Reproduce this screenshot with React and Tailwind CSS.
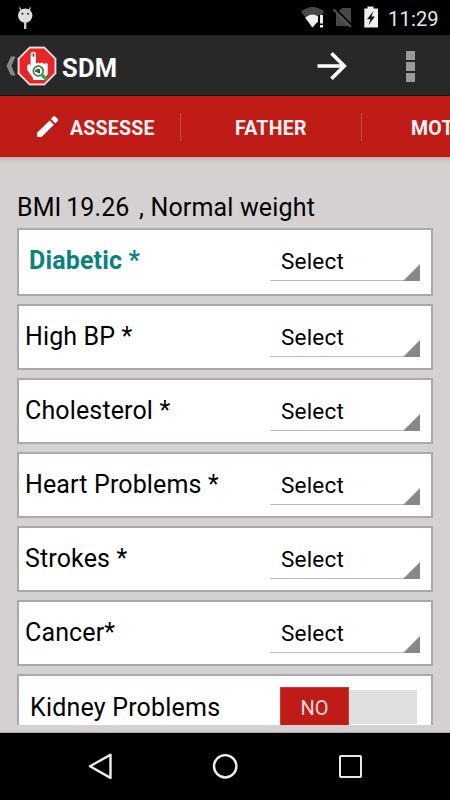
const rows = ["High BP *", "Cholesterol *", "Heart Problems *", "Strokes *", "Cancer*"];

function StatusBar() {
  return (
    <div className="flex h-[35px] shrink-0 items-start bg-black text-[#e6e6e6]">
      <svg className="ml-4 mt-[5px] h-6 w-[18px]" viewBox="0 0 18 24" fill="none">
        <path d="M3.500 2.500 5.500 6M14.500 2.500l-2 3.500" stroke="#dedede" strokeWidth="1.200" />
        <circle cx="9.200" cy="10.600" r="7.200" fill="#dedede" />
        <path d="M9.200 17v7" stroke="#c9c9c9" strokeWidth="2.400" />
        <circle cx="6.500" cy="8.700" r="1" fill="#222" />
        <circle cx="12" cy="8.700" r="1" fill="#222" />
      </svg>
      <svg className="ml-[267px] mt-[6px] h-[22px] w-6" viewBox="0 0 24 22">
        <path d="M0 5.500Q11.500-3.500 23.500 5.500L20.500 9H17.500v4L11.500 21Z" fill="#484848" />
        <path d="M4.200 11.700Q11 6 17 10.500v4.800L11.500 21.400Z" fill="#eee" />
        <path d="M19 9h3v8.500h-3zM19 19h3v2.500h-3z" fill="#eee" />
      </svg>
      <svg className="ml-2 mt-[6px] h-[22px] w-5" viewBox="0 0 20 22" fill="none">
        <path d="M9 2h9v18H3V8Z" fill="#484848" />
        <path d="m2.500 3 17 17" stroke="#000" strokeWidth="2" />
        <path d="m.5 3.500 17.500 17.500" stroke="#565656" strokeWidth="1.800" />
      </svg>
      <svg className="ml-[10px] mt-[6px] h-[22px] w-4" viewBox="0 0 16 22">
        <path d="M4.500.5h6v2H15V21.500H1.300v-19h3.200Z" fill="#eee" />
        <path d="M10.500 5 4 13.200h3.500L5.500 19 12 10.600H8.500Z" fill="#111" />
      </svg>
      <span className="ml-[9px] mt-[7px] w-[52px] whitespace-nowrap text-[20px] leading-6 tracking-[0.2px]">11:29</span>
    </div>
  );
}

function AppBar() {
  return (
    <div className="flex h-[61px] shrink-0 items-center border-t border-b border-t-[#202020] border-b-[#151515] bg-[#282828]">
      <svg className="ml-[6px] h-5 w-[10px]" viewBox="0 0 10 20">
        <path d="M5 .5h4.500L5.500 10l4 9.500H5L.5 10Z" fill="#888" />
      </svg>
      <svg className="ml-[1px] h-10 w-10" viewBox="0 0 40 40">
        <path d="M12.300.8h15.400L39.200 12.300v15.400L27.700 39.200H12.300L.8 27.700V12.300Z" fill="#eceaea" stroke="#999" strokeWidth=".6" />
        <path d="M13 2.500h14L37.500 13v14L27 37.500H13L2.500 27V13Z" fill="#e92525" />
        <path d="M13.600 8.500q0-2.800 2.700-2.800t2.700 2.800v9l2.500-1 1 1 2.500-1 1.500 1.200 3-.7 1.200 1V28l-2 3v3H16v-2l-5.700-8V19l2.300-1 1 2Z" fill="#fff" />
        <path d="M14.600 9h3.600M16.400 7.200v3.800" stroke="#b44" strokeWidth="1.100" />
        <circle cx="21.300" cy="25" r="5" fill="#e6f6ed" stroke="#187b49" strokeWidth="1.500" />
        <path d="m19.500 22 3 2v4l-3-2Z" fill="#c83635" />
        <path d="M22 23v4M18 25h2" stroke="#263b30" strokeWidth="1.500" />
        <path d="m25 29 4.500 4.200" stroke="#24ab42" strokeWidth="3.300" />
      </svg>
      <h1 className="ml-[5px] mt-[5px] w-[70px] whitespace-nowrap text-[25.500px] font-bold leading-[30px] tracking-[0.2px] text-white">SDM</h1>
      <svg className="ml-[185px] h-[30px] w-[30px]" viewBox="0 0 30 30" fill="none" stroke="#fff" strokeWidth="3.700">
        <path d="M.5 15H27M14.500 2.200 27.200 15 14.500 27.800" />
      </svg>
      <div className="ml-[59px] mt-[2px] flex flex-col gap-[2px]">
        <i className="h-[9px] w-[9px] bg-[#999]" />
        <i className="h-[9px] w-[9px] bg-[#999]" />
        <i className="h-[9px] w-[9px] bg-[#999]" />
      </div>
    </div>
  );
}

function Tabs() {
  return (
    <div className="flex h-[61px] w-full shrink-0 items-center overflow-hidden border-b border-[#d20e10] bg-[#bf1b17] pt-px text-[19.500px] font-bold leading-6 tracking-[0.25px] text-[#fff4f4]">
      <div className="flex w-[180px] shrink-0 items-center">
        <svg className="ml-[37px] h-[22px] w-[22px]" viewBox="0 0 22 22" fill="#fff">
          <path d="m0 16.700 12.600-12.200 4.300 4.300L4.500 21H0ZM14 3 16.200.5q1-.8 2 0l2.600 2.400q1 1 0 2L18.300 7.500Z" />
        </svg>
        <span className="ml-[11px] mt-[4px] whitespace-nowrap">ASSESSE</span>
      </div>
      <i className="h-7 w-px shrink-0 bg-[#ce4742]" />
      <span className="mt-[4px] w-[180px] shrink-0 pl-[54px]">FATHER</span>
      <i className="h-7 w-px shrink-0 bg-[#ce4742]" />
      <span className="mt-[4px] shrink-0 pl-[49px]">MOTHER</span>
    </div>
  );
}

function Select() {
  return (
    <div className="ml-auto mr-[11px] mt-[18px] flex h-[33px] w-[150px] border-b border-[#bcbcbc]">
      <span className="ml-[11px] whitespace-nowrap text-[22.500px] leading-[26px] tracking-[0.2px]">Select</span>
      <svg className="-mb-px ml-auto mt-auto h-[17px] w-[17px]" viewBox="0 0 17 17">
        <path d="M0 17 17 0v17Z" fill="#888" />
      </svg>
    </div>
  );
}

function Field({ label, first = false }) {
  return (
    <div className={`flex shrink-0 items-start border-2 border-[#aaa8a8] bg-white ${first ? "h-[68px]" : "h-[66px]"}`}>
      <span className={first ? "ml-[10px] mt-[16px] whitespace-nowrap text-[25px] font-bold leading-[30px] tracking-[0.16px] text-[#078480]" : "ml-[6px] mt-[16px] whitespace-nowrap text-[25px] leading-[30px] tracking-[0.14px]"}>{label}</span>
      <Select />
    </div>
  );
}

export default function App() {
  return (
    <div className="flex h-[800px] w-[450px] flex-col overflow-hidden bg-[#d5d1d0] font-['Roboto',sans-serif] text-black">
      <StatusBar />
      <AppBar />
      <Tabs />
      <div className="h-2 shrink-0 bg-gradient-to-b from-[#b8b4b3] via-[#cecac9] to-[#d5d1d0]" />
      <main className="flex h-[560px] shrink-0 flex-col overflow-hidden px-[17px]">
        <p className="mt-[28px] flex h-[35px] shrink-0 whitespace-pre text-[25px] leading-[30px]"><span className="w-[122px] tracking-[0.08px] [word-spacing:-1.500px]">BMI 19.26</span><span className="tracking-[0.16px]">, Normal weight</span></p>
        <div className="flex flex-col gap-2">
          <Field label="Diabetic *" first />
          {rows.map((label) => <Field key={label} label={label} />)}
          <div className="flex h-[68px] shrink-0 items-start border-2 border-[#aaa8a8] bg-white">
            <span className="ml-[11px] mt-[17px] whitespace-nowrap text-[25px] leading-[30px] tracking-[0.2px]">Kidney Problems</span>
            <div className="ml-auto mr-[14px] mt-[11px] flex w-[137px] items-start">
              <span className="h-10 w-[69px] border border-[#d03b38] bg-[#bf1b17] pt-[8px] text-center text-[20px] leading-6 text-[#f5dddd]">NO</span>
              <i className="mt-[3px] h-[34px] flex-1 bg-[#dfdfdf]" />
            </div>
          </div>
        </div>
      </main>
      <div className="h-2 shrink-0 border-b border-[#aaa7a6]" />
      <nav className="flex flex-1 items-start bg-black pt-5">
        <svg className="ml-[88px] h-[27px] w-6" viewBox="0 0 24 27" fill="none" stroke="#eee" strokeWidth="2.400" strokeLinejoin="round">
          <path d="M2 13.300 22.500 1.700v23.200Z" />
        </svg>
        <svg className="ml-[100px] h-[27px] w-[27px]" viewBox="0 0 27 27" fill="none" stroke="#eee" strokeWidth="2.400">
          <circle cx="13.200" cy="13.300" r="11.200" />
        </svg>
        <i className="ml-[100px] mt-[2px] h-[23px] w-[23px] rounded-[2px] border-[2.500px] border-[#e8e8e8]" />
      </nav>
    </div>
  );
}
